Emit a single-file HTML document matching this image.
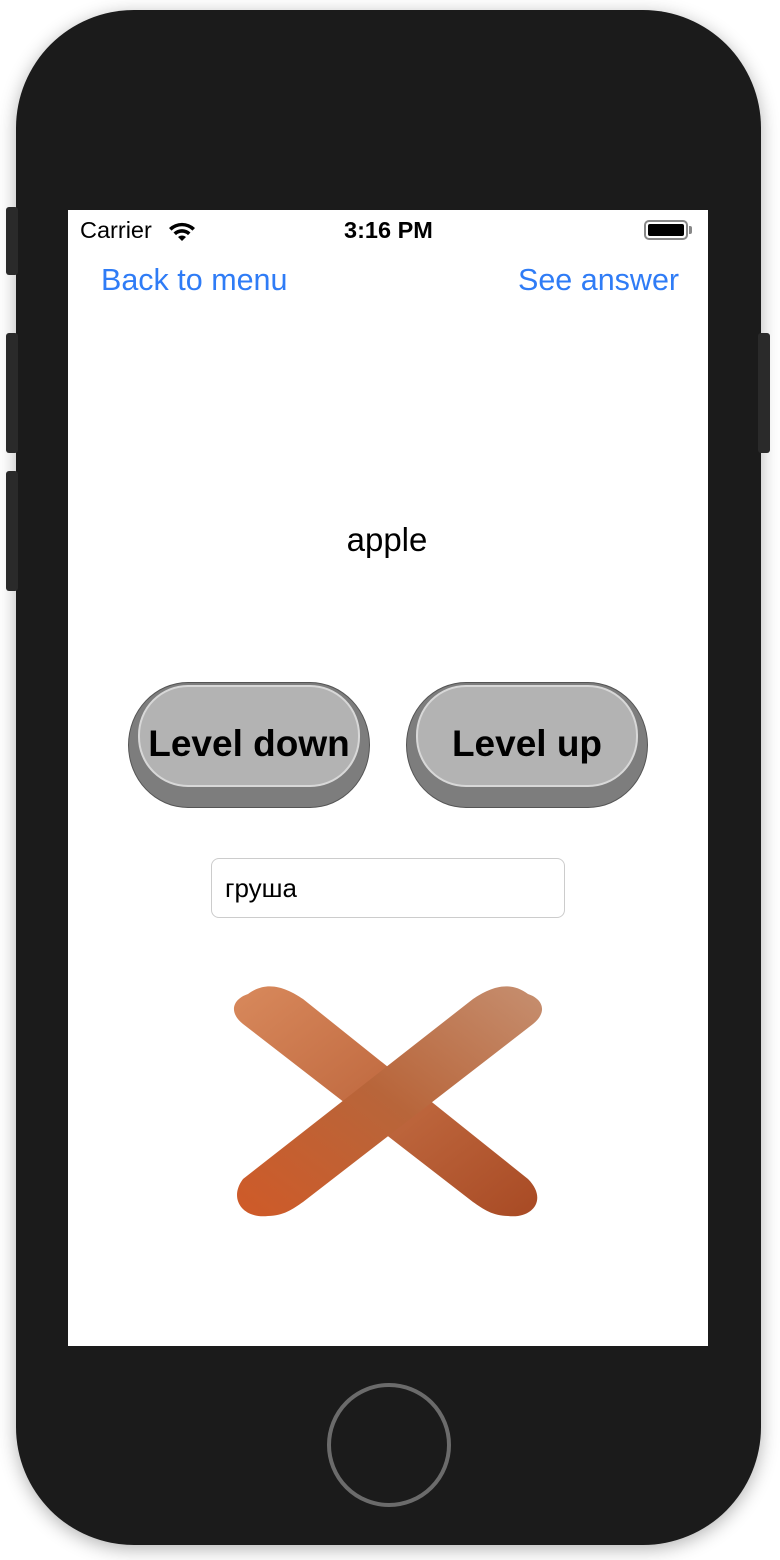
<!DOCTYPE html>
<html><head><meta charset="utf-8"><style>
body{margin:0;width:780px;height:1560px;background:#fff;position:relative;overflow:hidden;font-family:"Liberation Sans",sans-serif}
.phone{position:absolute;left:16px;top:10px;width:745px;height:1535px;background:#1b1b1b;border-radius:118px;box-shadow:0 4px 18px rgba(0,0,0,.3)}
.sb{position:absolute;background:#2a2a2a;border-radius:3px}
.screen{position:absolute;left:68px;top:210px;width:640px;height:1136px;background:#fff}
.t{position:absolute;white-space:nowrap}
.blue{color:#2f7cf6;font-size:30.5px}
.btn{position:absolute;top:682px;height:126px;width:242px;border-radius:60px/63px;background:#7d7d7d;border:1.5px solid #555;box-sizing:border-box}
.btn .in{position:absolute;left:9px;right:9px;top:2px;height:102px;border-radius:50px/50px;background:#b3b3b3;border:2px solid #d8d8d8;box-sizing:border-box}
.btn span{position:absolute;left:0;right:0;top:40px;text-align:center;font-weight:bold;font-size:37px;color:#000}
.home{position:absolute;left:327px;top:1383px;width:116px;height:116px;border:4px solid #6b6b6b;border-radius:50%}
</style></head><body>
<div class="phone"></div>
<div class="sb" style="left:6px;top:207px;width:12px;height:68px"></div>
<div class="sb" style="left:6px;top:333px;width:12px;height:120px"></div>
<div class="sb" style="left:6px;top:471px;width:12px;height:120px"></div>
<div class="sb" style="left:758px;top:333px;width:12px;height:120px"></div>
<div class="screen"></div>
<div class="t" style="left:80px;top:217px;font-size:23.5px">Carrier</div>
<svg style="position:absolute;left:167px;top:220px" width="30" height="22" viewBox="0 0 30 22"><path d="M2 8a19 19 0 0 1 26 0l-2.5 2.6a15 15 0 0 0-21 0z M6.5 12.5a12.5 12.5 0 0 1 17 0l-2.5 2.6a9 9 0 0 0-12 0z M11 17a6 6 0 0 1 8 0l-4 4z" fill="#000"/></svg>
<div class="t" style="left:344px;top:217px;font-size:23.5px;font-weight:bold">3:16 PM</div>
<div style="position:absolute;left:644px;top:220px;width:44px;height:20px;border:2px solid #888;border-radius:5px;box-sizing:border-box"><div style="position:absolute;left:2px;top:2px;right:2px;bottom:2px;background:#000;border-radius:2px"></div></div>
<div style="position:absolute;left:689px;top:226px;width:3px;height:8px;background:#888;border-radius:0 2px 2px 0"></div>
<div class="t blue" style="left:101px;top:263px">Back to menu</div>
<div class="t blue" style="left:518px;top:263px">See answer</div>
<div class="t" style="left:-3px;width:780px;text-align:center;top:521px;font-size:33px">apple</div>
<div class="btn" style="left:128px"><div class="in"></div><span>Level down</span></div>
<div class="btn" style="left:406px"><div class="in"></div><span>Level up</span></div>
<div style="position:absolute;left:211px;top:858px;width:354px;height:60px;border:1px solid #ccc;border-radius:8px;box-sizing:border-box"></div>
<div class="t" style="left:225px;top:873px;font-size:26px">груша</div>
<svg style="position:absolute;left:228px;top:984px" width="320" height="240" viewBox="0 0 320 240">
<defs><linearGradient id="a" x1="0" y1="0" x2="1" y2="1"><stop offset="0" stop-color="#d8895c"/><stop offset="1" stop-color="#a84a24"/></linearGradient>
<linearGradient id="b" x1="1" y1="0" x2="0" y2="1"><stop offset="0" stop-color="#c68f70"/><stop offset=".5" stop-color="#b8653a"/><stop offset="1" stop-color="#cf5a28"/></linearGradient></defs>
<path d="M20 10 C40 -5 60 5 75 15 L300 195 C320 215 305 235 280 232 C265 232 255 225 245 218 L15 40 C0 28 5 15 20 10Z" fill="url(#a)"/>
<path d="M300 10 C280 -5 260 5 245 15 L15 195 C0 215 15 235 40 232 C55 232 65 225 75 218 L305 40 C320 28 315 15 300 10Z" fill="url(#b)"/>
</svg>
<div class="home"></div>
</body></html>
